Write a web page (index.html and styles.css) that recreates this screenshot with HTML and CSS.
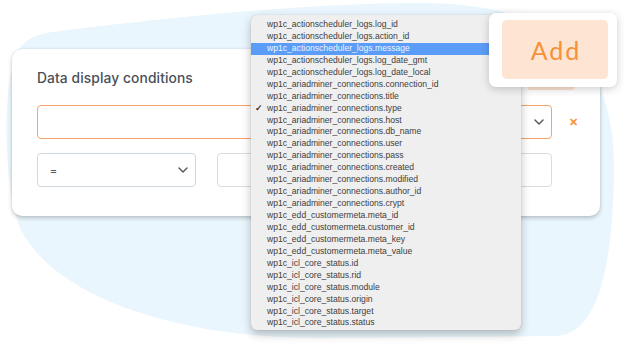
FILE: index.html
```html
<!DOCTYPE html>
<html lang="en">
<head>
  <meta charset="UTF-8" />
  <meta name="viewport" content="width=device-width, initial-scale=1" />
  <title>Data display conditions</title>
  <link rel="stylesheet" href="styles.css">
</head>
<body>
  <div class="stage">
    <svg class="blob" width="624" height="345" viewBox="0 0 624 345">
      <path d="M60 31 C150 20 300 3 420 3 C560 3 615 60 614 170 C613 260 600 336 555 336 L320 338 C180 338 60 300 22 232 C2 190 2 80 18 50 C28 36 42 33 60 31 Z" fill="#eaf6fd" />
    </svg>

    <section class="card">
      <div class="card-header">
        <h2>Data display conditions</h2>
        <button class="btn-add-small" type="button">Add</button>
      </div>

      <div class="cond-row">
        <div class="select select-field">
          <span></span>
          <svg class="chevron" width="10" height="6" viewBox="0 0 10 6"><path d="M1 1 L5 5 L9 1" fill="none" stroke="#555" stroke-width="1.4" stroke-linecap="round" stroke-linejoin="round"/></svg>
        </div>
        <span class="remove">✕</span>
      </div>

      <div class="cond-row cond-row-2">
        <div class="select select-op">
          <span>=</span>
          <svg class="chevron" width="10" height="6" viewBox="0 0 10 6"><path d="M1 1 L5 5 L9 1" fill="none" stroke="#555" stroke-width="1.4" stroke-linecap="round" stroke-linejoin="round"/></svg>
        </div>
        <div class="value-input"></div>
      </div>
    </section>

    <ul class="dropdown">
      <li>wp1c_actionscheduler_logs.log_id</li>
      <li>wp1c_actionscheduler_logs.action_id</li>
      <li class="active">wp1c_actionscheduler_logs.message</li>
      <li>wp1c_actionscheduler_logs.log_date_gmt</li>
      <li>wp1c_actionscheduler_logs.log_date_local</li>
      <li>wp1c_ariadminer_connections.connection_id</li>
      <li>wp1c_ariadminer_connections.title</li>
      <li class="checked">wp1c_ariadminer_connections.type</li>
      <li>wp1c_ariadminer_connections.host</li>
      <li>wp1c_ariadminer_connections.db_name</li>
      <li>wp1c_ariadminer_connections.user</li>
      <li>wp1c_ariadminer_connections.pass</li>
      <li>wp1c_ariadminer_connections.created</li>
      <li>wp1c_ariadminer_connections.modified</li>
      <li>wp1c_ariadminer_connections.author_id</li>
      <li>wp1c_ariadminer_connections.crypt</li>
      <li>wp1c_edd_customermeta.meta_id</li>
      <li>wp1c_edd_customermeta.customer_id</li>
      <li>wp1c_edd_customermeta.meta_key</li>
      <li>wp1c_edd_customermeta.meta_value</li>
      <li>wp1c_icl_core_status.id</li>
      <li>wp1c_icl_core_status.rid</li>
      <li>wp1c_icl_core_status.module</li>
      <li>wp1c_icl_core_status.origin</li>
      <li>wp1c_icl_core_status.target</li>
      <li>wp1c_icl_core_status.status</li>
    </ul>

    <div class="add-popup">
      <button class="btn-add-big" type="button">Add</button>
    </div>
  </div>
</body>
</html>
```

FILE: styles.css
```css
* {
  margin: 0;
  padding: 0;
  box-sizing: border-box;
}

body {
  background: #fff;
  width: 624px;
  height: 345px;
  overflow: hidden;
  font-family: 'Lato', 'Open Sans', sans-serif;
}

.stage {
  position: relative;
  width: 624px;
  height: 345px;
  padding: 49px 0 0 12px;
}

.blob {
  position: absolute;
  top: 0;
  left: 0;
}

.card {
  position: relative;
  width: 588px;
  height: 167px;
  background: #fff;
  border-radius: 10px;
  box-shadow: 0 2px 4px rgba(0, 0, 0, 0.22), 0 0 2px rgba(0, 0, 0, 0.08);
  padding: 13px 22px 0 25px;
}

.card-header {
  display: flex;
  justify-content: space-between;
  align-items: center;
  height: 28px;
  margin-bottom: 15px;
}

.card-header h2 {
  font-family: 'Inter', sans-serif;
  font-size: 13.8px;
  font-weight: 500;
  color: #4a5058;
  letter-spacing: 0.1px;
  padding-top: 3px;
}

.btn-add-small {
  width: 48px;
  height: 28px;
  margin-right: 3px;
  border: none;
  border-radius: 4px;
  background: #fde3d2;
  color: #f7923a;
  font-family: inherit;
  font-size: 12px;
}

.cond-row {
  display: flex;
  align-items: center;
  height: 34px;
}

.cond-row-2 {
  margin-top: 14px;
  gap: 21px;
  padding-right: 26px;
}

.select {
  height: 34px;
  border-radius: 4px;
  display: flex;
  align-items: center;
  justify-content: space-between;
  padding: 0 7px 0 12px;
  font-size: 12px;
  color: #555;
}

.select-field {
  flex: 1;
  border: 1px solid #f6a36a;
}

.select-op {
  width: 159px;
  border: 1px solid #cfd7e1;
}

.value-input {
  flex: 1;
  height: 34px;
  border: 1px solid #dcdcdc;
  border-radius: 4px;
}

.remove {
  margin-left: 16px;
  width: 10px;
  color: #f7923a;
  font-size: 11px;
  font-weight: 700;
  text-align: center;
}

.dropdown {
  position: absolute;
  left: 251px;
  top: 15px;
  width: 270px;
  height: 315px;
  list-style: none;
  background: #efefef;
  border-radius: 6px;
  box-shadow: 0 4px 10px rgba(0, 0, 0, 0.26), 0 0 1px rgba(0, 0, 0, 0.25);
  padding-top: 4px;
  font-family: 'Liberation Sans', Arial, sans-serif;
  font-size: 8.6px;
  color: #404040;
}

.dropdown li {
  position: relative;
  height: 11.94px;
  line-height: 11.94px;
  padding-left: 16px;
  white-space: nowrap;
}

.dropdown li.active {
  background: #5b9df6;
  color: #eef5ff;
}

.dropdown li.checked::before {
  content: '✓';
  position: absolute;
  left: 4px;
  font-size: 9px;
  font-weight: 700;
  color: #333;
}

.add-popup {
  position: absolute;
  left: 489px;
  top: 13px;
  width: 128px;
  height: 74px;
  background: #fff;
  border-radius: 7px;
  box-shadow: 0 2px 8px rgba(0, 0, 0, 0.2);
  padding: 7px 9px 8px 13px;
}

.btn-add-big {
  width: 100%;
  height: 100%;
  border: none;
  border-radius: 5px;
  background: #fde4d3;
  color: #f79139;
  font-family: 'Lato', sans-serif;
  font-size: 25px;
  letter-spacing: 2px;
  padding-left: 2px;
}
```
